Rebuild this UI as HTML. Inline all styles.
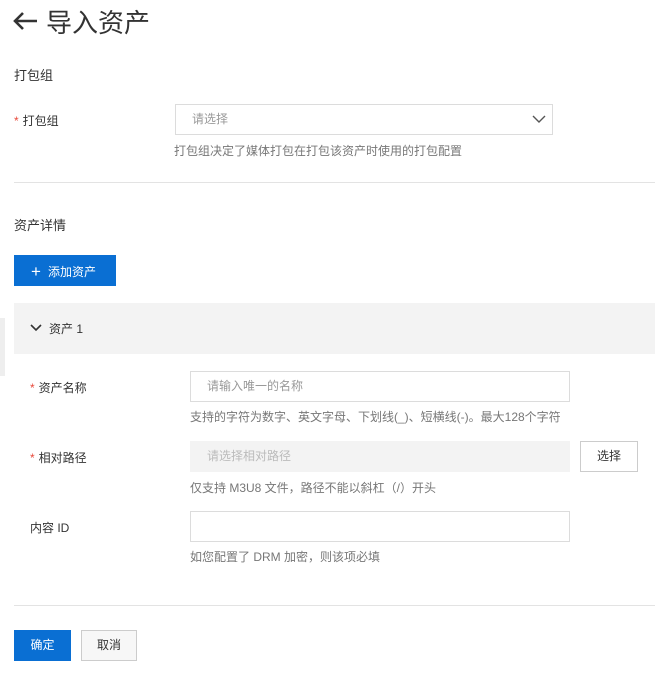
<!DOCTYPE html>
<html><head><meta charset="utf-8"><style>
*{box-sizing:border-box;margin:0;padding:0}
body{width:655px;height:697px;background:#fff;font-family:"Liberation Sans","Noto Sans CJK SC",sans-serif;color:#333;font-size:12px;position:relative;overflow:hidden}
.a{position:absolute}
.lbl{font-size:12px;color:#333}
.star{color:#e84a3c;margin-right:4px}
.inp{border:1px solid #dcdcdc;background:#fff;color:#999;font-size:12px;padding-left:16px;line-height:29px}
.help{color:#777;font-size:12px}
</style></head><body>
<svg class="a" style="left:13px;top:11px" width="26" height="20" viewBox="0 0 26 20"><path d="M2 10H24M10 2L2 10L10 18" stroke="#333" stroke-width="2.6" fill="none"/></svg>
<div class="a" style="left:46px;top:3px;font-size:26px;color:#333">导入资产</div>
<div class="a" style="left:14px;top:65px;font-size:13px">打包组</div>
<div class="a lbl" style="left:14px;top:112px"><span class="star">*</span>打包组</div>
<div class="a inp" style="left:175px;top:104px;width:378px;height:31px">请选择</div>
<svg class="a" style="left:532px;top:114px" width="14" height="10"><path d="M1 2L7 8L13 2" stroke="#555" stroke-width="1.4" fill="none"/></svg>
<div class="a help" style="left:174px;top:142px">打包组决定了媒体打包在打包该资产时使用的打包配置</div>
<div class="a" style="left:14px;top:182px;width:641px;height:1px;background:#e3e3e3"></div>
<div class="a" style="left:14px;top:215px;font-size:13px">资产详情</div>
<div class="a" style="left:14px;top:255px;width:102px;height:31px;background:#0a6fd3;color:#fff;line-height:31px;padding-left:17px;font-size:12px"><span style="font-size:17px;position:relative;top:1px;margin-right:7px">+</span>添加资产</div>
<div class="a" style="left:0;top:318px;width:5px;height:58px;background:#eee"></div>
<div class="a" style="left:14px;top:303px;width:641px;height:51px;background:#f3f3f3"></div>
<svg class="a" style="left:30px;top:323px" width="12" height="10"><path d="M1 2L6 7L11 2" stroke="#333" stroke-width="1.6" fill="none"/></svg>
<div class="a lbl" style="left:49px;top:320px">资产 1</div>
<div class="a lbl" style="left:30px;top:379px"><span class="star">*</span>资产名称</div>
<div class="a inp" style="left:190px;top:371px;width:380px;height:31px">请输入唯一的名称</div>
<div class="a help" style="left:190px;top:408px">支持的字符为数字、英文字母、下划线(_)、短横线(-)。最大128个字符</div>
<div class="a lbl" style="left:30px;top:449px"><span class="star">*</span>相对路径</div>
<div class="a inp" style="left:190px;top:441px;width:380px;height:31px;background:#f3f3f3;border-color:#f3f3f3;color:#bbb">请选择相对路径</div>
<div class="a" style="left:580px;top:441px;width:58px;height:31px;border:1px solid #ccc;text-align:center;line-height:29px;color:#333">选择</div>
<div class="a help" style="left:190px;top:479px">仅支持 M3U8 文件，路径不能以斜杠（/）开头</div>
<div class="a lbl" style="left:30px;top:519px">内容 ID</div>
<div class="a inp" style="left:190px;top:511px;width:380px;height:31px"></div>
<div class="a help" style="left:190px;top:548px">如您配置了 DRM 加密，则该项必填</div>
<div class="a" style="left:14px;top:605px;width:641px;height:1px;background:#e3e3e3"></div>
<div class="a" style="left:14px;top:630px;width:57px;height:31px;background:#0a6fd3;color:#fff;text-align:center;line-height:31px">确定</div>
<div class="a" style="left:81px;top:630px;width:56px;height:31px;border:1px solid #ccc;background:#f7f7f7;text-align:center;line-height:29px">取消</div>
</body></html>
